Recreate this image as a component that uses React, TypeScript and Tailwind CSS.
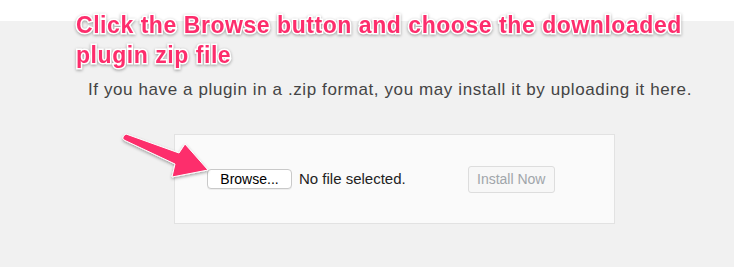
import React from 'react';

const Arrow: React.FC = () => (
  <svg className="absolute left-0 top-0 pointer-events-none" width="734" height="267" viewBox="0 0 734 267">
    <defs>
      <filter id="arrowShadow" x="-20%" y="-20%" width="140%" height="140%">
        <feDropShadow dx="0" dy="1.5" stdDeviation="1.5" floodColor="#000" floodOpacity="0.35" />
      </filter>
    </defs>
    <path
      d="M126 134 L179 153 L185 144 L208 170 L172 177 L175 164 L124 140 Q121 137 126 134 Z"
      fill="#fd2d6c"
      stroke="#ffffff"
      strokeWidth="1"
      strokeLinejoin="round"
      filter="url(#arrowShadow)"
    />
  </svg>
);

const App: React.FC = () => {
  return (
    <div className="relative w-[734px] h-[267px] overflow-hidden bg-[#f1f1f1] font-['Liberation_Sans',Arial,sans-serif]">
      <div className="h-[21px] bg-white" />
      <div className="pt-[57px]">
        <p className="pl-[88px] text-[17px] leading-[24px] tracking-[0.6px] text-[#444]">
          If you have a plugin in a .zip format, you may install it by uploading it here.
        </p>
        <div className="ml-[174px] mt-[32px] w-[441px] h-[90px] border border-[#e2e2e2] bg-[#fafafa] flex items-center pl-[32px]">
          <button className="w-[85px] h-[20px] bg-white border border-[#c9c9c9] rounded-[4px] text-[14px] leading-none text-black shadow-[0_1px_0_rgba(0,0,0,0.05)]">
            Browse...
          </button>
          <span className="ml-[7px] text-[15px] text-[#222]">No file selected.</span>
          <button className="ml-[62px] w-[87px] h-[27px] bg-[#f7f7f7] border border-[#dddddd] rounded-[3px] text-[14px] leading-none text-[#a0a5aa]">
            Install Now
          </button>
        </div>
      </div>

      <div className="absolute left-[76px] top-[10px] text-[23px] leading-[30px] tracking-[0.55px] font-bold text-[#fd2d6c] [paint-order:stroke_fill] [-webkit-text-stroke:3px_#ffffff] [filter:drop-shadow(0_1px_1.5px_rgba(0,0,0,0.35))]">
        Click the Browse button and choose the downloaded
        <br />
        plugin zip file
      </div>

      <Arrow />
    </div>
  );
};

export default App;
